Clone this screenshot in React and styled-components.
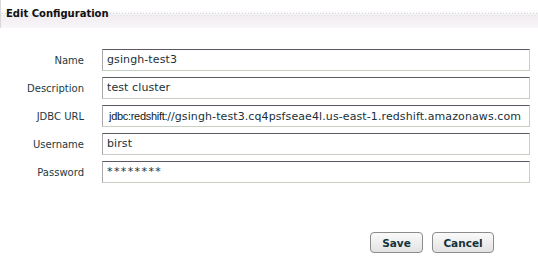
import React from 'react';
import styled, { createGlobalStyle } from 'styled-components';

const GlobalStyle = createGlobalStyle`
  html, body {
    margin: 0;
    padding: 0;
    background: #ffffff;
  }
  body {
    font-family: 'DejaVu Sans', Verdana, sans-serif;
  }
`;

const fields = [
  { name: 'name', label: 'Name', value: 'gsingh-test3' },
  { name: 'description', label: 'Description', value: 'test cluster' },
  {
    name: 'url',
    label: 'JDBC URL',
    prefix: 'jdbc:redshift:',
    value: '//gsingh-test3.cq4psfseae4l.us-east-1.redshift.amazonaws.com',
  },
  { name: 'username', label: 'Username', value: 'birst' },
  { name: 'password', label: 'Password', value: '********', password: true },
];

const Panel = () => (
  <Wrapper>
    <Header>
      <Title>Edit Configuration</Title>
    </Header>
    <Form>
      {fields.map((field) => (
        <Row key={field.name}>
          <Label>{field.label}</Label>
          <Box $password={field.password}>
            {field.prefix && <Prefix>{field.prefix}</Prefix>}
            {field.value}
          </Box>
        </Row>
      ))}
    </Form>
    <Actions>
      <Button type='button' $width={53}>
        Save
      </Button>
      <Button type='button' $width={62}>
        Cancel
      </Button>
    </Actions>
  </Wrapper>
);

const Wrapper = styled.div`
  width: 538px;
  height: 261px;
  background: #fff;
  overflow: hidden;
`;

const Header = styled.div`
  height: 28px;
  box-sizing: border-box;
  padding: 7px 0 0 5px;
  border-left: 1px solid #d8d8d8;
  background-color: #fff;
  background-image:
    radial-gradient(circle, rgba(205, 175, 210, 0.6) 0.6px, transparent 0.9px),
    radial-gradient(circle, rgba(175, 215, 180, 0.55) 0.6px, transparent 0.9px),
    linear-gradient(to bottom, #ffffff 0%, #ffffff 35%, #f2eef2 60%, #f8f6f8 100%);
  background-size: 3px 3px, 3px 3px, 100% 100%;
  background-position: 0 12px, 1.5px 13.5px, 0 0;
  background-repeat: repeat-x, repeat-x, no-repeat;
`;

const Title = styled.div`
  font-size: 10px;
  font-weight: bold;
  color: #111;
  line-height: 13px;
`;

const Form = styled.div`
  display: flex;
  flex-direction: column;
  gap: 6px;
  padding-top: 21px;
`;

const Row = styled.div`
  display: grid;
  grid-template-columns: 84px 428px;
  column-gap: 18px;
  align-items: center;
  height: 22px;
`;

const Label = styled.div`
  text-align: right;
  font-size: 10px;
  color: #1d3a40;
`;

const Box = styled.div`
  box-sizing: border-box;
  height: 22px;
  padding: 0 0 0 4px;
  border-top: 1px solid #5e5864;
  border-left: 1px solid #a9a9ab;
  border-right: 1px solid #c6cfc1;
  border-bottom: 1px solid #c6cfc1;
  font-size: ${(p) => (p.$password ? '11px' : '11px')};
  letter-spacing: ${(p) => (p.$password ? '1.4px' : '0.1px')};
  line-height: 20px;
  color: #1a3138;
  white-space: nowrap;
  overflow: hidden;
`;

const Prefix = styled.span`
  font-family: 'Liberation Sans', Arial, sans-serif;
  font-size: 11px;
  color: #101820;
  letter-spacing: -0.3px;
  margin-left: 2px;
`;

const Actions = styled.div`
  display: flex;
  justify-content: flex-end;
  gap: 9px;
  padding: 49px 44px 0 0;
`;

const Button = styled.button`
  width: ${(p) => p.$width}px;
  height: 21px;
  padding: 0;
  border: 1px solid #8c8c8c;
  border-radius: 4px;
  background: linear-gradient(to bottom, #fafafa 0%, #ececec 60%, #e2e2e2 100%);
  font-family: 'DejaVu Sans', Verdana, sans-serif;
  font-size: 10.5px;
  font-weight: bold;
  color: #14323a;
  cursor: pointer;
`;

export default function App() {
  return (
    <>
      <GlobalStyle />
      <Panel />
    </>
  );
}
